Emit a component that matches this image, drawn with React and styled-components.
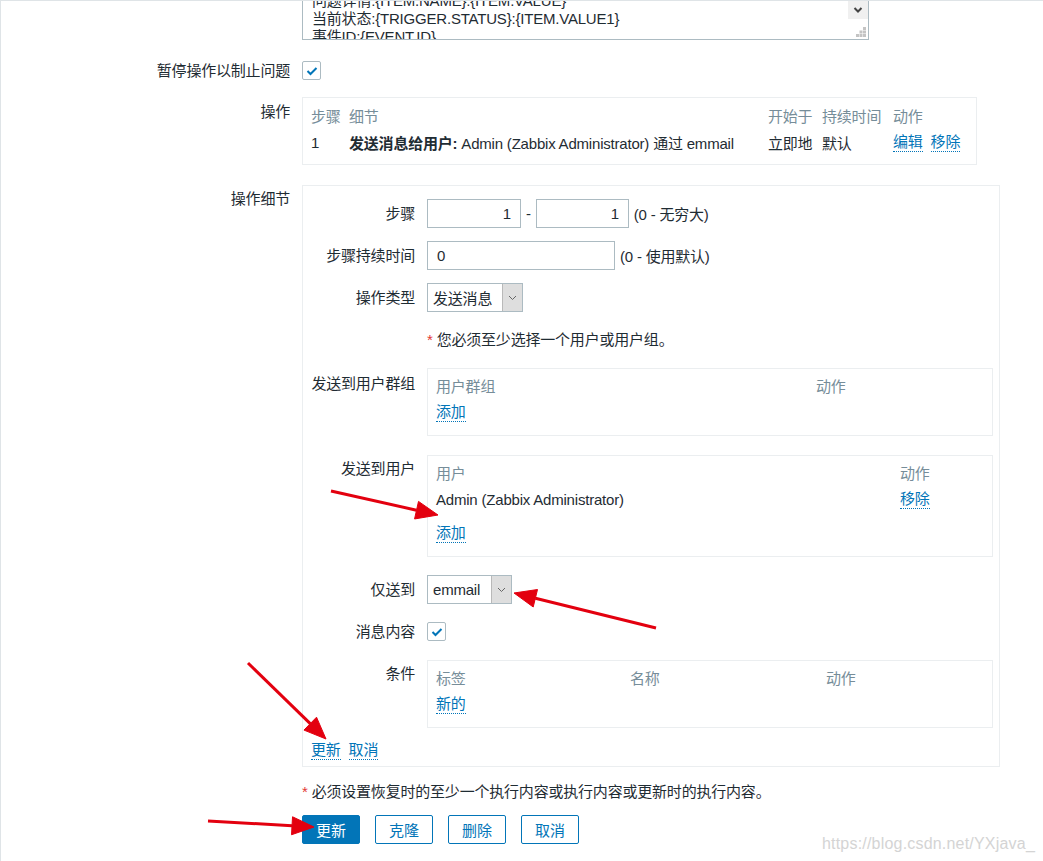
import React from 'react';
import styled, { createGlobalStyle } from 'styled-components';

const GlobalStyle = createGlobalStyle`
  html, body {
    margin: 0;
    padding: 0;
    background: #fff;
  }
  body {
    font-family: "Liberation Sans", Arial, "Noto Sans CJK SC", sans-serif;
    font-size: 15px;
    letter-spacing: -0.2px;
    color: #1f2c33;
  }
`;

const Page = styled.div`
  position: relative;
  width: 1043px;
  height: 861px;
  overflow: hidden;
  box-sizing: border-box;
  border-top: 1px solid #dfe4e7;
  border-left: 1px solid #dfe4e7;
`;

const Form = styled.div`
  display: flex;
  flex-direction: column;
`;

const Row = styled.div`
  display: grid;
  grid-template-columns: 289px 1fr;
  column-gap: 12px;
  align-items: ${p => (p.$top ? 'start' : 'center')};
  margin-top: ${p => p.$mt || 0}px;
`;

const Label = styled.div`
  text-align: right;
  line-height: 18px;
  white-space: nowrap;
  padding-top: ${p => p.$pt || 0}px;
`;

const Cell = styled.div`
  display: flex;
  align-items: center;
  gap: ${p => p.$gap || 0}px;
`;

/* long macro text box, scrolled so its first line is half out of view */
const TextArea = styled.div`
  position: relative;
  width: 567px;
  height: 39px;
  box-sizing: border-box;
  border: 1px solid #acbbc2;
  border-top: none;
  overflow: hidden;
`;

const TextLines = styled.div`
  margin-top: -9px;
  padding-left: 9px;
  line-height: 18px;
  white-space: nowrap;
`;

const ScrollDown = styled.div`
  position: absolute;
  right: 0;
  top: 0;
  width: 20px;
  height: 18px;
  background: #f0f0f0;
  display: flex;
  align-items: center;
  justify-content: center;
`;

const Grip = styled.svg`
  position: absolute;
  right: 2px;
  bottom: 2px;
`;

const Check = styled.div`
  width: 19px;
  height: 19px;
  box-sizing: border-box;
  border: 1px solid #acbbc2;
  border-radius: 2px;
  display: flex;
  align-items: center;
  justify-content: center;
  background: #fff;
`;

const TableBox = styled.div`
  box-sizing: border-box;
  width: ${p => p.$w}px;
  border: 1px solid #ebeef0;
  padding: ${p => p.$pad || '4px 8px 9px'};
`;

const TRow = styled.div`
  display: grid;
  grid-template-columns: ${p => p.$cols};
  align-items: center;
  height: ${p => p.$h || 26}px;
  margin-top: ${p => p.$mt || 0}px;
  white-space: nowrap;
`;

const Th = styled.div`
  color: #768d99;
`;

const Strong = styled.b`
  font-weight: bold;
`;

const Link = styled.span`
  color: #0275b8;
  border-bottom: 1px dotted #0275b8;
  line-height: 18px;
  margin-right: ${p => p.$mr || 0}px;
  cursor: pointer;
`;

const LinkCell = styled.div`
  display: flex;
  align-items: center;
`;

const FormLinks = styled(LinkCell)`
  margin-top: 13px;
  padding-left: 8px;
`;

const Details = styled.div`
  box-sizing: border-box;
  width: 698px;
  height: 582px;
  border: 1px solid #ebeef0;
  padding-top: 13px;
  padding-right: 6px;
  display: flex;
  flex-direction: column;
`;

const InnerRow = styled.div`
  display: grid;
  grid-template-columns: 112px 1fr;
  column-gap: 12px;
  align-items: ${p => (p.$top ? 'start' : 'center')};
  margin-top: ${p => p.$mt || 0}px;
`;

const Input = styled.div`
  box-sizing: border-box;
  width: ${p => p.$w}px;
  height: 29px;
  border: 1px solid #acbbc2;
  padding: 0 9px;
  display: flex;
  align-items: center;
  justify-content: ${p => (p.$right ? 'flex-end' : 'flex-start')};
  background: #fff;
`;

const Hint = styled.span`
  white-space: nowrap;
`;

const Select = styled.div`
  box-sizing: border-box;
  width: ${p => p.$w}px;
  height: 29px;
  border: 1px solid #acbbc2;
  display: flex;
  align-items: stretch;
  background: #fff;
`;

const SelectText = styled.div`
  flex: 1;
  padding-left: 5px;
  display: flex;
  align-items: center;
  white-space: nowrap;
`;

const SelectArrow = styled.div`
  width: 19px;
  background: #dedede;
  border-left: 1px solid #b9b9b9;
  display: flex;
  align-items: center;
  justify-content: center;
`;

const Note = styled.div`
  line-height: 18px;
  white-space: nowrap;
`;

const Star = styled.span`
  color: #e33734;
  margin-right: 4px;
`;

const Buttons = styled.div`
  display: flex;
  gap: 15px;
`;

const Button = styled.button`
  box-sizing: border-box;
  width: 58px;
  height: 29px;
  border: 1px solid #0275b8;
  border-radius: 2px;
  background: ${p => (p.$primary ? '#0275b8' : '#fff')};
  color: ${p => (p.$primary ? '#fff' : '#0275b8')};
  font-family: inherit;
  font-size: 15px;
  padding: 0;
`;

const Overlay = styled.svg`
  position: absolute;
  left: 0;
  top: 0;
  pointer-events: none;
`;

const Watermark = styled.div`
  position: absolute;
  right: 8px;
  bottom: 8px;
  font-size: 16px;
  color: #d4d4d4;
  letter-spacing: 0.2px;
  text-shadow: 0 0 1px #ffffff;
`;

const Tick = () => (
  <svg width="12" height="10" viewBox="0 0 12 10">
    <polyline points="1.5,5 4.5,8 10.5,2" fill="none" stroke="#0275b8" strokeWidth="2" />
  </svg>
);

const Chevron = ({ color = '#555', w = 9, sw = 1 }) => (
  <svg width={w} height="6" viewBox="0 0 9 6">
    <polyline points="1,1 4.5,4.5 8,1" fill="none" stroke={color} strokeWidth={sw} />
  </svg>
);

const CheckBox = () => (
  <Check>
    <Tick />
  </Check>
);

// red annotation arrow: a shaft plus a triangular head at the tip
const Arrow = ({ x1, y1, x2, y2, head = 22, wing = 9 }) => {
  const dx = x2 - x1;
  const dy = y2 - y1;
  const len = Math.hypot(dx, dy);
  const ux = dx / len;
  const uy = dy / len;
  const bx = x2 - ux * head;
  const by = y2 - uy * head;
  const p1 = `${bx - uy * wing},${by + ux * wing}`;
  const p2 = `${bx + uy * wing},${by - ux * wing}`;
  return (
    <g fill="#e3000f" stroke="#e3000f">
      <line x1={x1} y1={y1} x2={bx} y2={by} strokeWidth="3" />
      <polygon points={`${x2},${y2} ${p1} ${p2}`} strokeWidth="1" />
    </g>
  );
};

const opCols = '38px 419px 54px 71px auto';

export default function App() {
  return (
    <>
      <GlobalStyle />
      <Page>
        <Form>
          <Row>
            <div />
            <TextArea>
              <TextLines>
                <div>问题详情:{'{ITEM.NAME}'}:{'{ITEM.VALUE}'}</div>
                <div>当前状态:{'{TRIGGER.STATUS}'}:{'{ITEM.VALUE1}'}</div>
                <div>事件ID:{'{EVENT.ID}'}</div>
              </TextLines>
              <ScrollDown>
                <Chevron color="#444" w={10} sw={2} />
              </ScrollDown>
              <Grip width="10" height="10" viewBox="0 0 10 10">
                <g fill="#c4c4c4">
                  <rect x="7" y="0" width="3" height="3" />
                  <rect x="3.5" y="3.5" width="3" height="3" />
                  <rect x="7" y="3.5" width="3" height="3" />
                  <rect x="0" y="7" width="3" height="3" />
                  <rect x="3.5" y="7" width="3" height="3" />
                  <rect x="7" y="7" width="3" height="3" />
                </g>
              </Grip>
            </TextArea>
          </Row>

          <Row $mt={21}>
            <Label>暂停操作以制止问题</Label>
            <Cell>
              <CheckBox />
            </Cell>
          </Row>

          <Row $mt={17} $top>
            <Label $pt={6}>操作</Label>
            <TableBox $w={675} $pad="5px 8px 9px">
              <TRow $cols={opCols} $h={24}>
                <Th>步骤</Th>
                <Th>细节</Th>
                <Th>开始于</Th>
                <Th>持续时间</Th>
                <Th>动作</Th>
              </TRow>
              <TRow $cols={opCols} $mt={2}>
                <div>1</div>
                <div>
                  <Strong>发送消息给用户:</Strong> Admin (Zabbix Administrator) 通过 emmail
                </div>
                <div>立即地</div>
                <div>默认</div>
                <LinkCell>
                  <Link $mr={8}>编辑</Link>
                  <Link>移除</Link>
                </LinkCell>
              </TRow>
            </TableBox>
          </Row>

          <Row $mt={20} $top>
            <Label $pt={5}>操作细节</Label>
            <Details>
              <InnerRow>
                <Label>步骤</Label>
                <Cell $gap={5}>
                  <Input $w={94} $right>1</Input>
                  <span>-</span>
                  <Input $w={93} $right>1</Input>
                  <Hint>(0 - 无穷大)</Hint>
                </Cell>
              </InnerRow>

              <InnerRow $mt={13}>
                <Label>步骤持续时间</Label>
                <Cell $gap={5}>
                  <Input $w={188}>0</Input>
                  <Hint>(0 - 使用默认)</Hint>
                </Cell>
              </InnerRow>

              <InnerRow $mt={13}>
                <Label>操作类型</Label>
                <Cell>
                  <Select $w={96}>
                    <SelectText>发送消息</SelectText>
                    <SelectArrow>
                      <Chevron color="#666" />
                    </SelectArrow>
                  </Select>
                </Cell>
              </InnerRow>

              <InnerRow $mt={19}>
                <div />
                <Note>
                  <Star>*</Star>您必须至少选择一个用户或用户组。
                </Note>
              </InnerRow>

              <InnerRow $mt={19} $top>
                <Label $pt={7}>发送到用户群组</Label>
                <TableBox $w={566}>
                  <TRow $cols="380px auto" $h={25}>
                    <Th>用户群组</Th>
                    <Th>动作</Th>
                  </TRow>
                  <TRow $cols="1fr" $h={28}>
                    <LinkCell>
                      <Link>添加</Link>
                    </LinkCell>
                  </TRow>
                </TableBox>
              </InnerRow>

              <InnerRow $mt={19} $top>
                <Label $pt={5}>发送到用户</Label>
                <TableBox $w={566}>
                  <TRow $cols="464px auto" $h={25}>
                    <Th>用户</Th>
                    <Th>动作</Th>
                  </TRow>
                  <TRow $cols="464px auto" $h={28}>
                    <div>Admin (Zabbix Administrator)</div>
                    <LinkCell>
                      <Link>移除</Link>
                    </LinkCell>
                  </TRow>
                  <TRow $cols="1fr" $h={28} $mt={6}>
                    <LinkCell>
                      <Link>添加</Link>
                    </LinkCell>
                  </TRow>
                </TableBox>
              </InnerRow>

              <InnerRow $mt={18}>
                <Label>仅送到</Label>
                <Cell>
                  <Select $w={85}>
                    <SelectText>emmail</SelectText>
                    <SelectArrow>
                      <Chevron color="#666" />
                    </SelectArrow>
                  </Select>
                </Cell>
              </InnerRow>

              <InnerRow $mt={18}>
                <Label>消息内容</Label>
                <Cell>
                  <CheckBox />
                </Cell>
              </InnerRow>

              <InnerRow $mt={19} $top>
                <Label $pt={5}>条件</Label>
                <TableBox $w={566}>
                  <TRow $cols="194px 196px auto" $h={25}>
                    <Th>标签</Th>
                    <Th>名称</Th>
                    <Th>动作</Th>
                  </TRow>
                  <TRow $cols="1fr" $h={28}>
                    <LinkCell>
                      <Link>新的</Link>
                    </LinkCell>
                  </TRow>
                </TableBox>
              </InnerRow>

              <FormLinks>
                <Link $mr={8}>更新</Link>
                <Link>取消</Link>
              </FormLinks>
            </Details>
          </Row>

          <Row $mt={16}>
            <div />
            <Note>
              <Star>*</Star>必须设置恢复时的至少一个执行内容或执行内容或更新时的执行内容。
            </Note>
          </Row>

          <Row $mt={14}>
            <div />
            <Buttons>
              <Button $primary>更新</Button>
              <Button>克隆</Button>
              <Button>删除</Button>
              <Button>取消</Button>
            </Buttons>
          </Row>
        </Form>

        <Overlay width="1043" height="861">
          <Arrow x1={330} y1={490} x2={437} y2={514} />
          <Arrow x1={655} y1={627} x2={513} y2={592} />
          <Arrow x1={247} y1={662} x2={325} y2={738} />
          <Arrow x1={207} y1={820} x2={313} y2={826} />
        </Overlay>

        <Watermark>https://blog.csdn.net/YXjava_</Watermark>
      </Page>
    </>
  );
}
